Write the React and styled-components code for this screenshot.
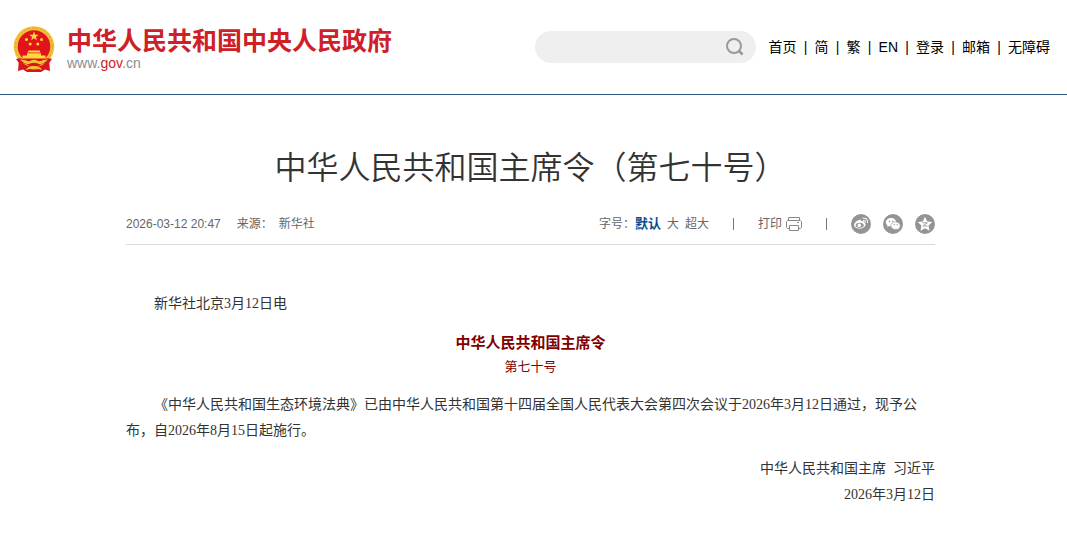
import React from 'react';
import styled, { createGlobalStyle } from 'styled-components';

const GlobalStyle = createGlobalStyle`
  body {
    margin: 0;
    background: #fff;
    color: #333;
    font-family: "Liberation Serif", "Noto Sans CJK SC", sans-serif;
    font-size: 14px;
  }
  a {
    color: inherit;
    text-decoration: none;
  }
`

const Header = styled.header`
  display: flex;
  align-items: center;
  justify-content: space-between;
  height: 94px;
  padding: 0 17px 0 13px;
  border-bottom: 1px solid #2b5583;
`

const Logo = styled.a`
  display: flex;
  align-items: center;
  gap: 12px;
  padding-top: 4px;
  white-space: nowrap;
`

const LogoName = styled.div`
  font: bold 25px/28px "Noto Sans CJK SC", sans-serif;
  color: #cd2127;
`

const LogoUrl = styled.div`
  font: 14px/20px "Liberation Sans", sans-serif;
  color: #8d8d8d;

  em {
    font-style: normal;
    color: #cd2127;
  }
`

const HeaderRight = styled.div`
  display: flex;
  align-items: center;
  gap: 13px;
`

const SearchForm = styled.form`
  display: flex;
  align-items: center;
  box-sizing: border-box;
  width: 221px;
  height: 32px;
  padding: 0 12px 0 16px;
  border-radius: 16px;
  background: #efefef;
`

const SearchInput = styled.input`
  flex: 1;
  min-width: 0;
  border: none;
  outline: none;
  background: none;
  font: inherit;
`

const IconButton = styled.button`
  display: flex;
  padding: 0;
  border: none;
  background: none;
  color: ${(props) => props.$color || '#999'};
  cursor: pointer;
`

const Nav = styled.nav`
  display: flex;
  font: 14px/20px "Liberation Sans", "Noto Sans CJK SC", sans-serif;
  color: #000;
  white-space: nowrap;
`

const NavDivider = styled.span`
  width: 18px;
  text-align: center;
`

const Main = styled.main`
  padding-right: 6px;
`

const Article = styled.article`
  max-width: 809px;
  margin: 0 auto;
`

const Title = styled.h1`
  margin: 0;
  padding: 46px 0 25px;
  font: 350 32px/48px "Noto Sans CJK SC", sans-serif;
  text-align: center;
`

const Meta = styled.div`
  display: flex;
  align-items: center;
  justify-content: space-between;
  height: 20px;
  padding-bottom: 10px;
  border-bottom: 1px solid #dadada;
  font: 12px/20px "Liberation Sans", "Noto Sans CJK SC", sans-serif;
  color: #666;
`

const MetaGroup = styled.div`
  display: flex;
  align-items: center;
  gap: ${(props) => props.$gap || 0}px;
`

const SizeButton = styled.button`
  padding: 0;
  border: none;
  background: none;
  font: inherit;
  font-weight: ${(props) => (props.$active ? 'bold' : 'normal')};
  font-size: ${(props) => (props.$active ? '13px' : '12px')};
  color: ${(props) => (props.$active ? '#004a8f' : 'inherit')};
  cursor: pointer;
`

const PrintButton = styled(SizeButton)`
  display: flex;
  align-items: center;
  gap: 4px;
`

const MetaDivider = styled.span`
  width: 1px;
  height: 12px;
  background: #777;
`

const Body = styled.div`
  padding-top: 46px;
  line-height: 26px;
`

const Paragraph = styled.p`
  margin: 0 0 12px;
  text-indent: ${(props) => (props.$align ? '0' : '2em')};
  text-align: ${(props) => props.$align || 'left'};
`

const OrderName = styled.strong`
  display: block;
  font: bold 15px/25px "Noto Sans CJK SC", sans-serif;
  color: #800000;
`

const OrderNumber = styled.span`
  display: block;
  font-size: 13px;
  color: #800000;
`

const Emblem = () => (
  <svg width="42" height="46" viewBox="0 0 42 46" aria-hidden="true">
    <path d="M6 33 L36 33 L37 45 L32 43.500 L28 46 L14 46 L10 43.500 L5 45 Z" fill="#d9161c" />
    <circle cx="21" cy="20.500" r="20.300" fill="#f3c136" />
    <circle cx="21" cy="20.500" r="18.400" fill="none" stroke="#dba024" strokeDasharray="2 2" />
    <circle cx="21" cy="20.500" r="16.300" fill="#e0141a" />
    <path d="M21 5.500 l1.200 3.200 3.400.1 -2.700 2.100 1 3.300 -2.900-2 -2.900 2 1-3.300 -2.700-2.100 3.400-.1z" fill="#ffd83a" />
    <g fill="#ffd83a">
      <circle cx="13.500" cy="13.500" r="1.500" />
      <circle cx="28.500" cy="13.500" r="1.500" />
      <circle cx="17.200" cy="18" r="1.500" />
      <circle cx="24.800" cy="18" r="1.500" />
      <path d="M15.500 24.500h11l1 2h-13zM14 27.200h14v2.300h4.500v3h-23v-3h4.500z" />
    </g>
    <path d="M3 33 C9 31 14 34 17 37 L25 37 C28 34 33 31 39 33 L35 38.500 C31 36.500 28 38 26 40 L16 40 C14 38 11 36.500 7 38.500 Z" fill="#d9161c" />
    <path d="M7 33.500 C12 33.500 15 36 17 35 C19.500 33.300 22.500 33.300 25 35 C27 36 30 33.500 35 33.500 C31 38 27 39 25 37.500 C22.500 36.500 19.500 36.500 17 37.500 C15 39 11 38 7 33.500 Z" fill="#f3c136" />
    <path d="M13 44 C14 41.500 17 40 21 40 C25 40 28 41.500 29 44 L25.500 43 L21 43.500 L16.500 43 Z" fill="#f3c136" />
  </svg>
)

const SearchIcon = () => (
  <svg width="18" height="18" viewBox="0 0 18 18" fill="none" stroke="currentColor" strokeWidth="2" aria-hidden="true">
    <circle cx="8" cy="8" r="7" />
    <path d="M13 13 L16.500 16.500" strokeWidth="2.600" />
  </svg>
)

const PrintIcon = () => (
  <svg width="16" height="16" viewBox="0 0 16 16" fill="none" stroke="#888" aria-hidden="true">
    <path d="M2.500 4.500v-3h11v3M3.500 12.500h-2l-1-1v-6l1-1h13l1 1v6l-1 1h-2" />
    <path d="M3.500 9.500h9v5h-9zM11 6.500h2" />
  </svg>
)

const WeiboIcon = () => (
  <svg width="20" height="20" viewBox="0 0 20 20" aria-hidden="true">
    <circle cx="10" cy="10" r="10" fill="currentColor" />
    <path d="M8.300 5.900c1.300-.4 2.100.2 1.800 1.400 1.700-.6 3.200-.3 2.900 1.300 1.500.5 2 1.600 1.400 2.900-.9 1.900-3.200 3.100-5.800 3.100-3.100 0-5.500-1.500-5.500-3.600 0-2 2.600-4.500 5.200-5.100z" fill="#fff" />
    <ellipse cx="8.700" cy="11.200" rx="4" ry="2.500" fill="currentColor" />
    <circle cx="8.300" cy="11.300" r="1.800" fill="#fff" />
    <path d="M12.200 4.300c2.700-.5 4.800 1.500 4.300 4.200M12.400 6.500c1.300-.2 2.100.7 1.800 1.800" fill="none" stroke="#fff" strokeWidth="1.100" strokeLinecap="round" />
  </svg>
)

const WechatIcon = () => (
  <svg width="20" height="20" viewBox="0 0 20 20" aria-hidden="true">
    <circle cx="10" cy="10" r="10" fill="currentColor" />
    <path d="M8 4c-3 0-5.200 1.900-5.200 4.300 0 1.300.7 2.500 1.800 3.200l-.5 1.700 2-1.100c.6.200 1.200.3 1.900.3 3 0 5.200-1.800 5.200-4.100s-2.200-4.300-5.200-4.300z" fill="#fff" />
    <path d="M12.600 7.900c-2.700 0-4.700 1.700-4.700 3.800s2 3.700 4.700 3.700c.5 0 1.100-.1 1.500-.2l1.800 1-.4-1.500c1.100-.7 1.800-1.800 1.800-3 0-2.100-2-3.800-4.700-3.800z" fill="#fff" stroke="currentColor" strokeWidth=".6" />
    <g fill="currentColor">
      <circle cx="6.400" cy="7.200" r=".7" />
      <circle cx="9.700" cy="7.200" r=".7" />
      <circle cx="11.200" cy="10.700" r=".6" />
      <circle cx="14.100" cy="10.700" r=".6" />
    </g>
  </svg>
)

const QzoneIcon = () => (
  <svg width="20" height="20" viewBox="0 0 20 20" aria-hidden="true">
    <circle cx="10" cy="10" r="10" fill="currentColor" />
    <path d="M10 2.800l2.200 4.700 5.100.6-3.800 3.500 1 5.100-4.500-2.500-4.500 2.500 1-5.100-3.800-3.500 5.100-.6z" fill="#fff" />
    <path d="M7.500 8.800h4.800l-4.300 3.200h4.500" fill="none" stroke="currentColor" strokeWidth=".9" />
  </svg>
)

const links = ['首页', '简', '繁', 'EN', '登录', '邮箱', '无障碍']

const shares = [
  { name: '微博', Icon: WeiboIcon },
  { name: '微信', Icon: WechatIcon },
  { name: 'QQ空间', Icon: QzoneIcon },
]

const App = () => {
  return (
    <>
      <GlobalStyle />
      <Header>
        <Logo href="#">
          <Emblem />
          <div>
            <LogoName>中华人民共和国中央人民政府</LogoName>
            <LogoUrl>www.<em>gov</em>.cn</LogoUrl>
          </div>
        </Logo>
        <HeaderRight>
          <SearchForm>
            <SearchInput type="text" aria-label="搜索" />
            <IconButton type="button" aria-label="搜索"><SearchIcon /></IconButton>
          </SearchForm>
          <Nav>
            {links.map((link, i) => (
              <React.Fragment key={link}>
                {i > 0 && <NavDivider>|</NavDivider>}
                <a href="#">{link}</a>
              </React.Fragment>
            ))}
          </Nav>
        </HeaderRight>
      </Header>
      <Main>
        <Article>
          <Title>中华人民共和国主席令（第七十号）</Title>
          <Meta>
            <MetaGroup $gap={16}>
              <time>2026-03-12 20:47</time>
              <MetaGroup $gap={6}>
                <span>来源：</span>
                <span>新华社</span>
              </MetaGroup>
            </MetaGroup>
            <MetaGroup $gap={24}>
              <MetaGroup $gap={6}>
                <MetaGroup>
                  <span>字号：</span>
                  <SizeButton $active>默认</SizeButton>
                </MetaGroup>
                <SizeButton>大</SizeButton>
                <SizeButton>超大</SizeButton>
              </MetaGroup>
              <MetaDivider />
              <PrintButton>打印<PrintIcon /></PrintButton>
              <MetaDivider />
              <MetaGroup $gap={12}>
                {shares.map(({ name, Icon }) => (
                  <IconButton key={name} type="button" aria-label={name} $color="#949494">
                    <Icon />
                  </IconButton>
                ))}
              </MetaGroup>
            </MetaGroup>
          </Meta>
          <Body>
            <Paragraph>新华社北京3月12日电</Paragraph>
            <Paragraph $align="center">
              <OrderName>中华人民共和国主席令</OrderName>
              <OrderNumber>第七十号</OrderNumber>
            </Paragraph>
            <Paragraph>
              《中华人民共和国生态环境法典》已由中华人民共和国第十四届全国人民代表大会第四次会议于2026年3月12日通过，现予公布，自2026年8月15日起施行。
            </Paragraph>
            <Paragraph $align="right">
              中华人民共和国主席&ensp;习近平<br />
              2026年3月12日
            </Paragraph>
          </Body>
        </Article>
      </Main>
    </>
  );
};

export default App;
